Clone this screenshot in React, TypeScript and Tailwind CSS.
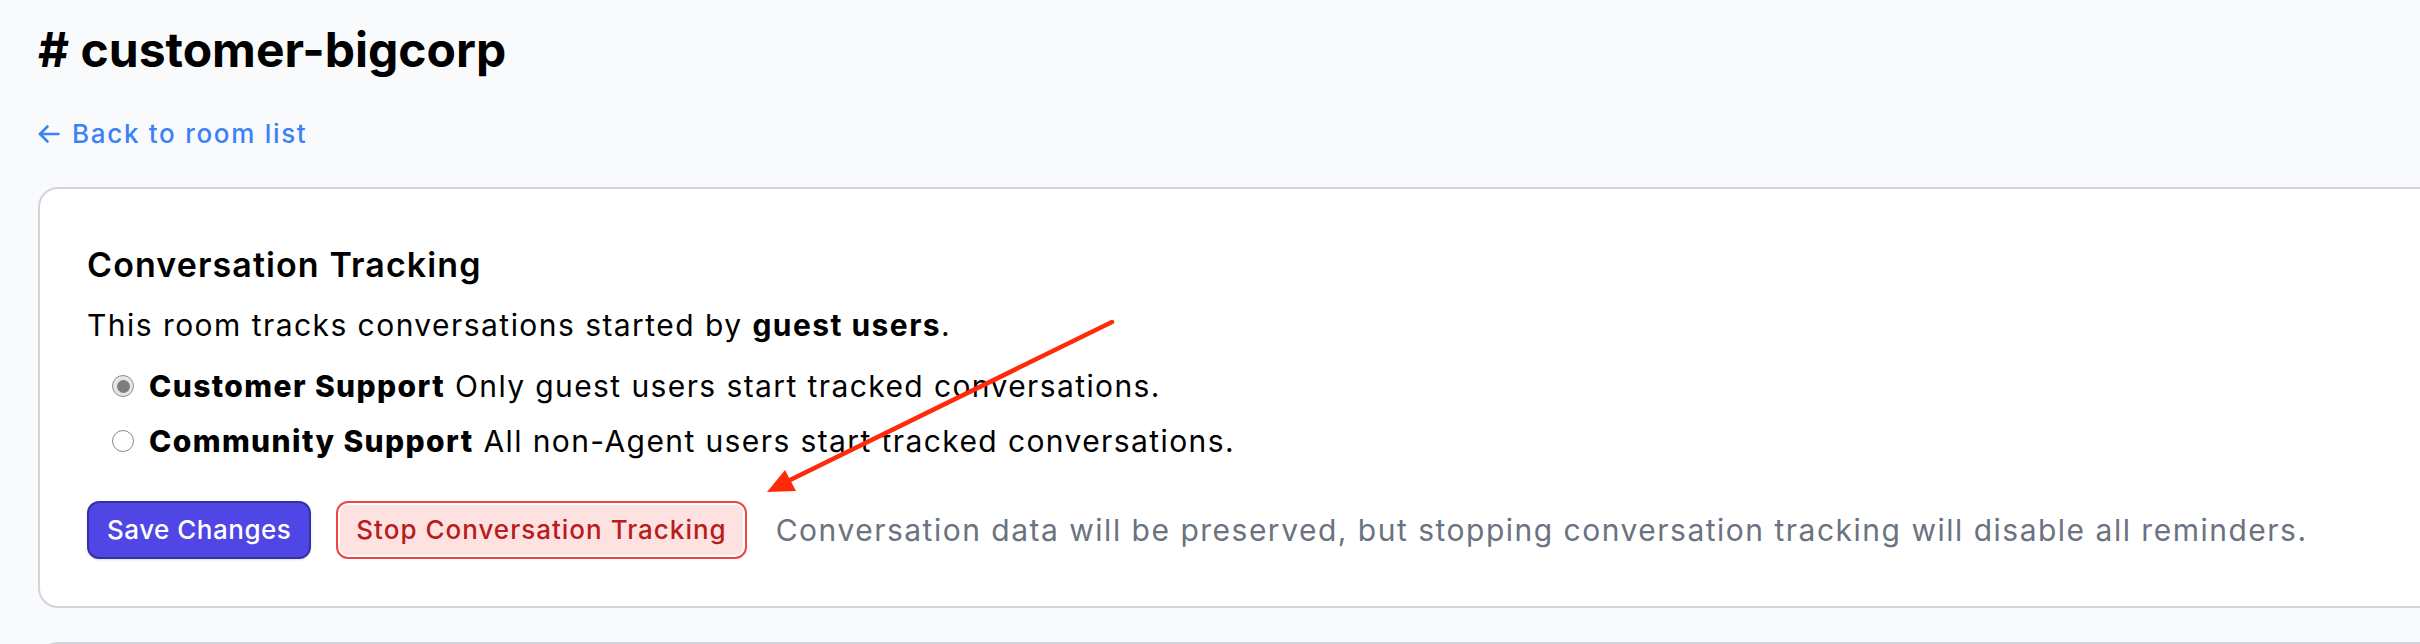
import React from "react";

const font = { fontFamily: "Inter, 'Noto Sans', sans-serif" };

const Radio = ({ checked }: { checked?: boolean }) =>
  checked ? (
    <span className="flex h-[22px] w-[22px] shrink-0 items-center justify-center rounded-full border border-[#8e8e8e] bg-[#e6e6e6]">
      <span className="h-[13px] w-[13px] rounded-full bg-[#7d7d7d]" />
    </span>
  ) : (
    <span className="h-[22px] w-[22px] shrink-0 rounded-full border-[1.5px] border-[#8a8a8a] bg-white" />
  );

const App = () => {
  const options = [
    { id: "customer", label: "Customer Support", text: "Only guest users start tracked conversations.", checked: true },
    { id: "community", label: "Community Support", text: "All non-Agent users start tracked conversations.", checked: false },
  ];

  return (
    <div className="relative h-screen overflow-hidden bg-[#f9fafb] pl-[38px] pt-[18px]" style={font}>
      <h1 className="text-[48px] font-bold leading-[64px] text-black"># customer-bigcorp</h1>

      <a href="#" className="mt-[34px] flex items-center gap-[12px] text-[26px] font-medium leading-[36px] tracking-[1.7px] text-[#3b82f6]">
        <svg width="22" height="20" viewBox="0 0 22 20" fill="none" stroke="currentColor" strokeWidth="2.6" strokeLinecap="round" strokeLinejoin="round">
          <path d="M20.5 10H2" />
          <path d="M9.5 2.5 2 10l7.5 7.5" />
        </svg>
        <span>Back to room list</span>
      </a>

      {/* conversation tracking card */}
      <div className="mt-[35px] w-[2440px] rounded-[20px] border-2 border-[#d1d5db] bg-white pb-[47px] pl-[47px] pt-[52px]">
        <h2 className="text-[34px] font-semibold leading-[48px] tracking-[1.1px] text-black">Conversation Tracking</h2>
        <p className="mt-[14px] text-[30px] leading-[44px] tracking-[1.45px] text-black">
          This room tracks conversations started by <b className="font-bold">guest users</b>.
        </p>

        <div className="mt-[17px] flex flex-col gap-[11px] pl-[25px]">
          {options.map((o) => (
            <label key={o.id} className="flex items-center gap-[15px] text-[30px] leading-[44px] tracking-[1.4px] text-black">
              <Radio checked={o.checked} />
              <span>
                <b className="font-extrabold">{o.label}</b> {o.text}
              </span>
            </label>
          ))}
        </div>

        <div className="mt-[38px] flex items-center">
          <button className="rounded-[12px] border-2 border-[#3730a3] bg-[#4f46e5] px-[18px] py-[9px] text-[26px] font-medium leading-[36px] tracking-[0.5px] text-white shadow-sm">
            Save Changes
          </button>
          <button className="ml-[25px] rounded-[12px] border-2 border-[#ef4444] bg-[#fee2e2] px-[18px] py-[9px] text-[26px] font-medium leading-[36px] tracking-[1px] text-[#b91c1c] shadow-[inset_0_0_0_2px_#fff]">
            Stop Conversation Tracking
          </button>
          <span className="ml-[29px] text-[30px] leading-[44px] tracking-[1.5px] text-[#6b7280]">
            Conversation data will be preserved, but stopping conversation tracking will disable all reminders.
          </span>
        </div>
      </div>

      {/* next card, cut off by the viewport */}
      <div className="mt-[34px] h-[200px] w-[2440px] rounded-[20px] border-2 border-[#d1d5db] bg-white" />

      {/* annotation arrow */}
      <svg className="pointer-events-none absolute left-0 top-0" width="2420" height="644">
        <line x1="1112" y1="322" x2="788" y2="481" stroke="#ff2a0a" strokeWidth="4.5" strokeLinecap="round" />
        <polygon points="767,492 796,491 785,470" fill="#ff2a0a" />
      </svg>
    </div>
  );
};

export default App;
